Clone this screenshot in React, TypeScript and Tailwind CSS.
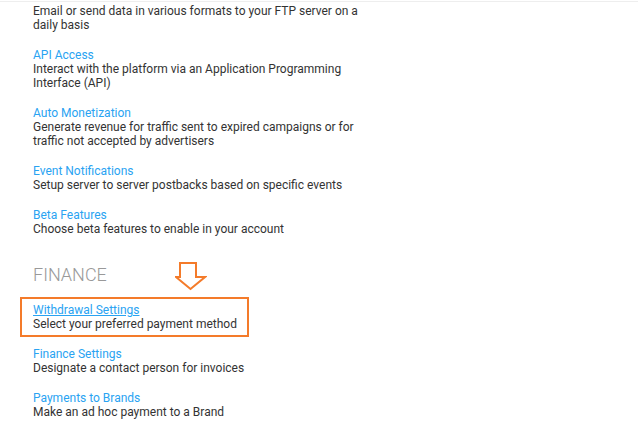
import React from "react"

type Item = { title: string; desc: string; hover?: boolean }

const tools: Item[] = [
  { title: "API Access", desc: "Interact with the platform via an Application Programming Interface (API)" },
  { title: "Auto Monetization", desc: "Generate revenue for traffic sent to expired campaigns or for traffic not accepted by advertisers" },
  { title: "Event Notifications", desc: "Setup server to server postbacks based on specific events" },
  { title: "Beta Features", desc: "Choose beta features to enable in your account" },
]

const finance: Item[] = [
  { title: "Withdrawal Settings", desc: "Select your preferred payment method", hover: true },
  { title: "Finance Settings", desc: "Designate a contact person for invoices" },
  { title: "Payments to Brands", desc: "Make an ad hoc payment to a Brand" },
]

function SettingItem({ item }: { item: Item }) {
  return (
    <div className="relative mb-[16px] w-[337px]">
      {item.hover && (
        <div className="pointer-events-none absolute -left-[13px] -top-[6px] h-[40px] w-[229px] border-2 border-[#f47b2a]" />
      )}
      <a
        href="#"
        className={
          item.hover
            ? "block text-[12px] leading-[14px] text-[#29a3f2] underline underline-offset-1"
            : "block text-[12px] leading-[14px] text-[#29a3f2]"
        }
      >
        {item.title}
      </a>
      <p className="text-[12px] leading-[14px] text-[#333]">{item.desc}</p>
    </div>
  )
}

function DownArrow() {
  return (
    <svg width="32" height="30" viewBox="0 0 32 30" className="absolute left-[142px] top-[-4px]">
      <path
        d="M5 2 H21 V16 H30 L15.5 28 L1 16 H5 Z"
        fill="none"
        stroke="#f47b2a"
        strokeWidth="2"
        strokeLinejoin="miter"
      />
    </svg>
  )
}

export default function App() {
  return (
    <div
      className="h-[448px] w-[638px] overflow-hidden bg-white border-t border-t-white"
      style={{ fontFamily: "Roboto, 'Liberation Sans', sans-serif" }}
    >
      <div className="h-px w-full bg-[#eeeeee]" />
      <div className="pl-[33px] pt-[2px]">
        <p className="mb-[16px] w-[337px] text-[12px] leading-[14px] text-[#333]">
          Email or send data in various formats to your FTP server on a daily basis
        </p>
        {tools.map((t) => (
          <SettingItem key={t.title} item={t} />
        ))}
        <div className="relative mt-[29px] mb-[18px]">
          <h2 className="text-[18px] leading-[20px] font-light text-[#999]">FINANCE</h2>
          <DownArrow />
        </div>
        {finance.map((t) => (
          <SettingItem key={t.title} item={t} />
        ))}
      </div>
    </div>
  )
}
